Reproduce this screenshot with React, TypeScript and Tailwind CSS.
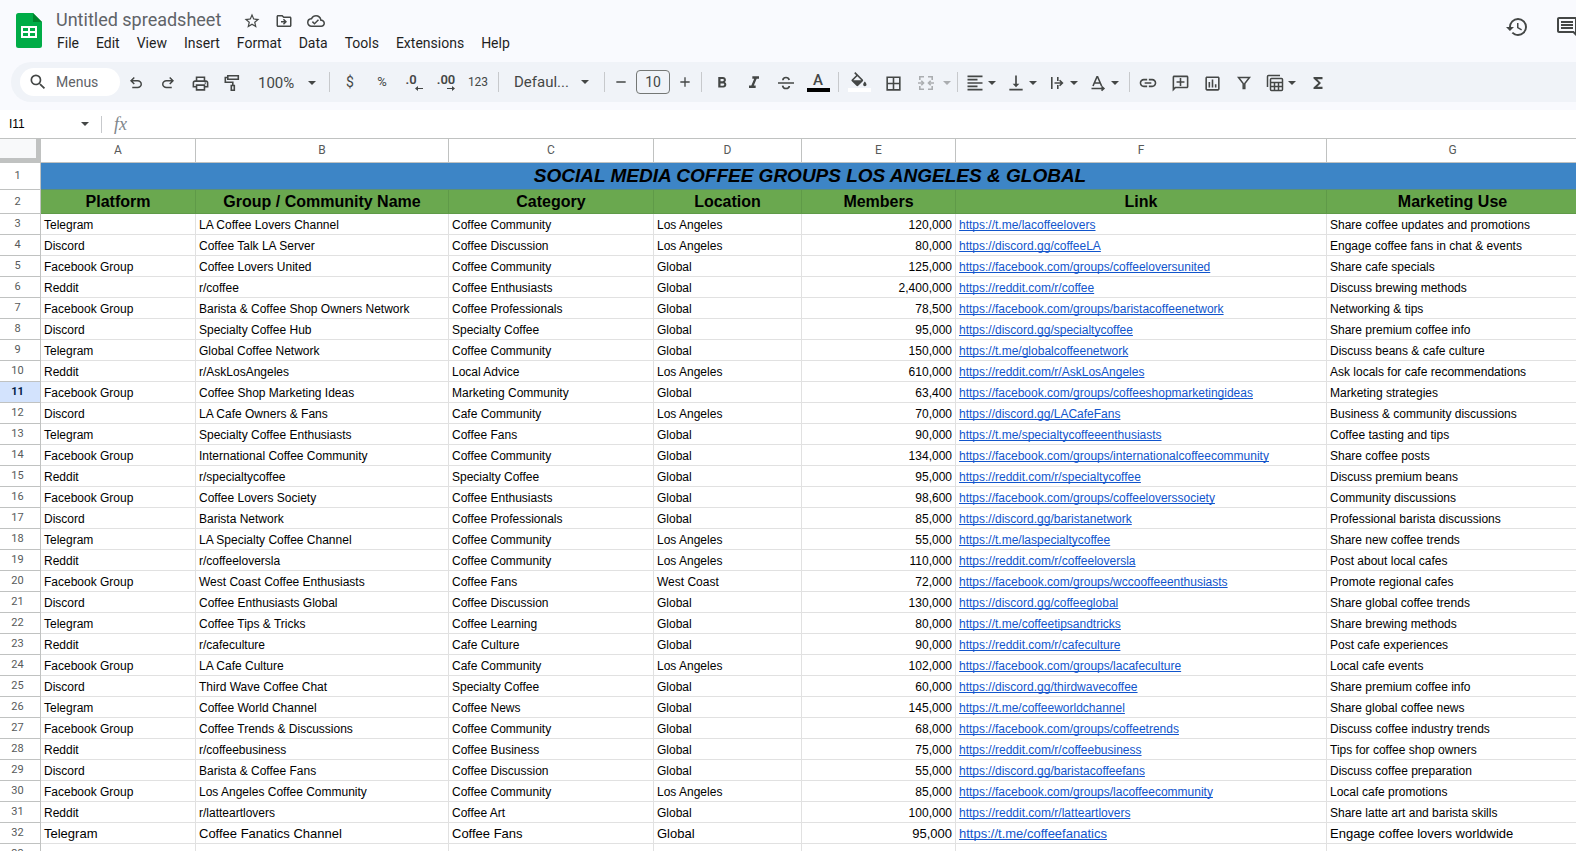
import type { ReactNode } from 'react';
import {
    MdStarBorder,
    MdOutlineDriveFileMove,
    MdOutlineCloudDone,
    MdSearch,
    MdOutlinePrint,
    MdFormatBold,
    MdFormatItalic,
    MdFormatColorFill,
    MdBorderAll,
    MdFormatAlignLeft,
    MdVerticalAlignBottom,
    MdLink,
    MdOutlineAddComment,
    MdOutlineInsertChart,
    MdFunctions,
    MdHistory,
    MdOutlineComment,
    MdAdd,
    MdRemove
} from 'react-icons/md';

type Row = [string, string, string, string, string, string, string];

const MENUS = ['File', 'Edit', 'View', 'Insert', 'Format', 'Data', 'Tools', 'Extensions', 'Help'];

const COLUMNS = ['A', 'B', 'C', 'D', 'E', 'F', 'G'];

const HEADERS = ['Platform', 'Group / Community Name', 'Category', 'Location', 'Members', 'Link', 'Marketing Use'];

const ROWS: Row[] = [
    ['Telegram', 'LA Coffee Lovers Channel', 'Coffee Community', 'Los Angeles', '120,000', 'https://t.me/lacoffeelovers', 'Share coffee updates and promotions'],
    ['Discord', 'Coffee Talk LA Server', 'Coffee Discussion', 'Los Angeles', '80,000', 'https://discord.gg/coffeeLA', 'Engage coffee fans in chat & events'],
    ['Facebook Group', 'Coffee Lovers United', 'Coffee Community', 'Global', '125,000', 'https://facebook.com/groups/coffeeloversunited', 'Share cafe specials'],
    ['Reddit', 'r/coffee', 'Coffee Enthusiasts', 'Global', '2,400,000', 'https://reddit.com/r/coffee', 'Discuss brewing methods'],
    ['Facebook Group', 'Barista & Coffee Shop Owners Network', 'Coffee Professionals', 'Global', '78,500', 'https://facebook.com/groups/baristacoffeenetwork', 'Networking & tips'],
    ['Discord', 'Specialty Coffee Hub', 'Specialty Coffee', 'Global', '95,000', 'https://discord.gg/specialtycoffee', 'Share premium coffee info'],
    ['Telegram', 'Global Coffee Network', 'Coffee Community', 'Global', '150,000', 'https://t.me/globalcoffeenetwork', 'Discuss beans & cafe culture'],
    ['Reddit', 'r/AskLosAngeles', 'Local Advice', 'Los Angeles', '610,000', 'https://reddit.com/r/AskLosAngeles', 'Ask locals for cafe recommendations'],
    ['Facebook Group', 'Coffee Shop Marketing Ideas', 'Marketing Community', 'Global', '63,400', 'https://facebook.com/groups/coffeeshopmarketingideas', 'Marketing strategies'],
    ['Discord', 'LA Cafe Owners & Fans', 'Cafe Community', 'Los Angeles', '70,000', 'https://discord.gg/LACafeFans', 'Business & community discussions'],
    ['Telegram', 'Specialty Coffee Enthusiasts', 'Coffee Fans', 'Global', '90,000', 'https://t.me/specialtycoffeeenthusiasts', 'Coffee tasting and tips'],
    ['Facebook Group', 'International Coffee Community', 'Coffee Community', 'Global', '134,000', 'https://facebook.com/groups/internationalcoffeecommunity', 'Share coffee posts'],
    ['Reddit', 'r/specialtycoffee', 'Specialty Coffee', 'Global', '95,000', 'https://reddit.com/r/specialtycoffee', 'Discuss premium beans'],
    ['Facebook Group', 'Coffee Lovers Society', 'Coffee Enthusiasts', 'Global', '98,600', 'https://facebook.com/groups/coffeeloverssociety', 'Community discussions'],
    ['Discord', 'Barista Network', 'Coffee Professionals', 'Global', '85,000', 'https://discord.gg/baristanetwork', 'Professional barista discussions'],
    ['Telegram', 'LA Specialty Coffee Channel', 'Coffee Community', 'Los Angeles', '55,000', 'https://t.me/laspecialtycoffee', 'Share new coffee trends'],
    ['Reddit', 'r/coffeeloversla', 'Coffee Community', 'Los Angeles', '110,000', 'https://reddit.com/r/coffeeloversla', 'Post about local cafes'],
    ['Facebook Group', 'West Coast Coffee Enthusiasts', 'Coffee Fans', 'West Coast', '72,000', 'https://facebook.com/groups/wccooffeeenthusiasts', 'Promote regional cafes'],
    ['Discord', 'Coffee Enthusiasts Global', 'Coffee Discussion', 'Global', '130,000', 'https://discord.gg/coffeeglobal', 'Share global coffee trends'],
    ['Telegram', 'Coffee Tips & Tricks', 'Coffee Learning', 'Global', '80,000', 'https://t.me/coffeetipsandtricks', 'Share brewing methods'],
    ['Reddit', 'r/cafeculture', 'Cafe Culture', 'Global', '90,000', 'https://reddit.com/r/cafeculture', 'Post cafe experiences'],
    ['Facebook Group', 'LA Cafe Culture', 'Cafe Community', 'Los Angeles', '102,000', 'https://facebook.com/groups/lacafeculture', 'Local cafe events'],
    ['Discord', 'Third Wave Coffee Chat', 'Specialty Coffee', 'Global', '60,000', 'https://discord.gg/thirdwavecoffee', 'Share premium coffee info'],
    ['Telegram', 'Coffee World Channel', 'Coffee News', 'Global', '145,000', 'https://t.me/coffeeworldchannel', 'Share global coffee news'],
    ['Facebook Group', 'Coffee Trends & Discussions', 'Coffee Community', 'Global', '68,000', 'https://facebook.com/groups/coffeetrends', 'Discuss coffee industry trends'],
    ['Reddit', 'r/coffeebusiness', 'Coffee Business', 'Global', '75,000', 'https://reddit.com/r/coffeebusiness', 'Tips for coffee shop owners'],
    ['Discord', 'Barista & Coffee Fans', 'Coffee Discussion', 'Global', '55,000', 'https://discord.gg/baristacoffeefans', 'Discuss coffee preparation'],
    ['Facebook Group', 'Los Angeles Coffee Community', 'Coffee Community', 'Los Angeles', '85,000', 'https://facebook.com/groups/lacoffeecommunity', 'Local cafe promotions'],
    ['Reddit', 'r/latteartlovers', 'Coffee Art', 'Global', '100,000', 'https://reddit.com/r/latteartlovers', 'Share latte art and barista skills'],
    ['Telegram', 'Coffee Fanatics Channel', 'Coffee Fans', 'Global', '95,000', 'https://t.me/coffeefanatics', 'Engage coffee lovers worldwide']
];

const SELECTED_ROW = 11;

function Caret() {
    return (
        <svg className="h-1 w-2 shrink-0" viewBox="0 0 8 4" fill="currentColor">
            <path d="M0 0h8L4 4z" />
        </svg>
    );
}

function Divider() {
    return <div className="mx-1 h-5 w-px shrink-0 bg-[#c7c9cc]" />;
}

function ToolButton({ label, children }: { label: string; children: ReactNode }) {
    return (
        <button aria-label={label} className="flex h-7 w-8 shrink-0 items-center justify-center pt-[2px]">
            {children}
        </button>
    );
}

function TextButton({ label, children }: { label: string; children: ReactNode }) {
    return (
        <button aria-label={label} className="flex h-7 w-8 shrink-0 items-center justify-center">
            {children}
        </button>
    );
}

function NarrowButton({ label, children }: { label: string; children: ReactNode }) {
    return (
        <button aria-label={label} className="flex h-7 w-7 shrink-0 items-center justify-center pt-[2px]">
            {children}
        </button>
    );
}

function SplitButton({ label, children }: { label: string; children: ReactNode }) {
    return (
        <button aria-label={label} className="flex h-7 w-10 shrink-0 items-center gap-[3px] pt-[2px] pl-[3px]">
            {children}
            <Caret />
        </button>
    );
}

function SheetsLogo() {
    return (
        <svg className="h-[35px] w-[26px] shrink-0" viewBox="0 0 26 35">
            <path d="M2.500 0H17l9 9v23.500a2.500 2.500 0 0 1-2.500 2.500h-21A2.500 2.500 0 0 1 0 32.500v-30A2.500 2.500 0 0 1 2.500 0z" fill="#00ac47" />
            <path d="M17 0l9 9h-9z" fill="#00832d" />
            <path d="M5 13h16v12H5zM7 15v3h5v-3zM14 15v3h5v-3zM7 20v3h5v-3zM14 20v3h5v-3z" fill="#fff" fillRule="evenodd" />
        </svg>
    );
}

function UndoIcon({ flipped = false }: { flipped?: boolean }) {
    return (
        <svg className={`h-[18px] w-[18px] ${flipped ? '-scale-x-100' : ''}`} viewBox="0 0 24 24" fill="currentColor">
            <path d="M7 19v-2h7.100q1.575 0 2.738-1T18 13.500 16.838 11 14.100 10H7.800l2.600 2.600L9 14 4 9l5-5 1.400 1.400L7.800 8h6.300q2.425 0 4.163 1.575T20 13.500t-1.737 3.925T14.100 19z" />
        </svg>
    );
}

function PaintRollerIcon() {
    return (
        <svg className="h-[18px] w-[18px]" viewBox="0 0 18 18" fill="none" stroke="currentColor" strokeWidth="1.600">
            <path d="M4.800 1.800h10.500v3.400H4.800z" />
            <path d="M4.800 3.500H2.300v4.700h7.500v3" />
            <path d="M8.300 11.500h3v4.800h-3z" />
        </svg>
    );
}

function DecimalIcon({ digits, increase = false }: { digits: string; increase?: boolean }) {
    return (
        <span className="flex flex-col items-end">
            <span className={`text-[13px] leading-3 font-semibold ${increase ? '' : 'pr-[6px]'}`}>{digits}</span>
            <svg className="h-[5px] w-2" viewBox="0 0 8 5" fill="currentColor">
                <path d={increase ? 'M0 2h5V0l3 2.500L5 5V3H0z' : 'M8 2H3V0L0 2.500 3 5V3h5z'} />
            </svg>
        </span>
    );
}

function StrikeIcon() {
    return (
        <svg className="h-5 w-5" viewBox="0 0 20 20" fill="none" stroke="currentColor" strokeWidth="1.700">
            <path d="M2 10h16" />
            <path d="M13.200 7C12.800 5.300 11.700 4.500 10 4.500S6.900 5.500 6.900 7.300" />
            <path d="M6.600 12.600c.3 1.900 1.500 2.900 3.400 2.900s3.300-1 3.300-2.600" />
        </svg>
    );
}

function MergeIcon() {
    return (
        <svg className="h-[18px] w-[18px]" viewBox="0 0 18 18" fill="none" stroke="currentColor" strokeWidth="1.600">
            <path d="M7 2.800H2.800V6M11 2.800h4.200V6M7 15.200H2.800V12M11 15.200h4.200V12" />
            <path d="M1 9h5M17 9h-5" />
            <path d="M4.300 6.800L6.500 9l-2.200 2.200M13.700 6.800L11.500 9l2.200 2.200" />
        </svg>
    );
}

function WrapIcon() {
    return (
        <svg className="h-5 w-5" viewBox="0 0 20 20" fill="none" stroke="currentColor" strokeWidth="1.600">
            <path d="M4.800 4v12M10.800 4v4M10.800 12v4" />
            <path d="M7.500 10h7.500M12.600 7.200l2.800 2.800-2.800 2.800" />
        </svg>
    );
}

function RotateIcon() {
    return (
        <svg className="h-5 w-5" viewBox="0 0 20 20" fill="none" stroke="currentColor" strokeWidth="1.600">
            <path d="M5 13L9 3.800h.6L13.600 13M6.400 10h5.800" />
            <path d="M3.500 15.500h11.500M13.500 13.300l2.400 2.200-2.400 2.200" />
        </svg>
    );
}

function FilterIcon() {
    return (
        <svg className="h-[18px] w-[18px]" viewBox="0 0 18 18" fill="none" stroke="currentColor" strokeWidth="1.500">
            <path d="M3.500 3.500h11L9.800 9.600v5H8.200v-5z" />
        </svg>
    );
}

function TableViewIcon() {
    return (
        <svg className="h-5 w-5" viewBox="0 0 20 20" fill="none" stroke="currentColor" strokeWidth="1.500">
            <path d="M2.500 14V3.500a1 1 0 0 1 1-1H15" />
            <rect x="5.500" y="5.500" width="12" height="12" rx="1" />
            <path d="M5.500 9.500h12M5.500 13.500h12M9.500 9.500v8M13.500 9.500v8" />
        </svg>
    );
}

function TitleBar() {
    return (
        <header className="flex h-[62px] items-start pt-2 pl-4">
            <div className="pt-[5px]">
                <SheetsLogo />
            </div>
            <div className="ml-[6px]">
                <div className="flex h-6 items-center text-[#444746]">
                    <input
                        aria-label="Document title"
                        defaultValue="Untitled spreadsheet"
                        className="w-[190px] bg-transparent pl-2 text-lg text-[#5f6368] outline-none"
                    />
                    <div className="flex items-center gap-1">
                        <NarrowButton label="Star">
                            <MdStarBorder className="h-[18px] w-[18px]" />
                        </NarrowButton>
                        <NarrowButton label="Move">
                            <MdOutlineDriveFileMove className="h-[18px] w-[18px]" />
                        </NarrowButton>
                        <NarrowButton label="Saved to Drive">
                            <MdOutlineCloudDone className="h-[18px] w-[18px]" />
                        </NarrowButton>
                    </div>
                </div>
                <nav className="flex h-[22px] items-center gap-px pl-px text-sm text-[#1f1f1f]">
                    {MENUS.map((menu) => (
                        <button key={menu} className="px-2">
                            {menu}
                        </button>
                    ))}
                </nav>
            </div>
            <div className="ml-auto flex shrink-0 gap-[26px] pt-[7px] text-[#444746]">
                <button aria-label="Version history">
                    <MdHistory className="h-6 w-6" />
                </button>
                <button aria-label="Comments" className="-mr-[3px]">
                    <MdOutlineComment className="h-6 w-6" />
                </button>
            </div>
        </header>
    );
}

function Toolbar() {
    return (
        <div className="ml-[11px] flex h-10 items-center overflow-hidden rounded-l-full bg-[#f0f3f8] pl-[9px] text-[#444746]">
            <button className="flex h-7 w-[100px] shrink-0 items-center gap-2 rounded-full bg-white pl-2 text-sm">
                <MdSearch className="h-5 w-5" />
                <span className="text-[#5f6368]">Menus</span>
            </button>
            <ToolButton label="Undo">
                <UndoIcon />
            </ToolButton>
            <ToolButton label="Redo">
                <UndoIcon flipped />
            </ToolButton>
            <ToolButton label="Print">
                <MdOutlinePrint className="h-[19px] w-[19px]" />
            </ToolButton>
            <ToolButton label="Paint format">
                <PaintRollerIcon />
            </ToolButton>
            <label className="flex w-[77px] shrink-0 items-center pt-[2px] pl-[10px]">
                <select aria-label="Zoom" className="w-[50px] appearance-none bg-transparent text-[15px] outline-none">
                    <option>100%</option>
                </select>
                <Caret />
            </label>
            <Divider />
            <TextButton label="Format as currency">
                <span className="text-sm">$</span>
            </TextButton>
            <TextButton label="Format as percent">
                <span className="text-[13px]">%</span>
            </TextButton>
            <TextButton label="Decrease decimal places">
                <DecimalIcon digits=".0" />
            </TextButton>
            <TextButton label="Increase decimal places">
                <DecimalIcon digits=".00" increase />
            </TextButton>
            <TextButton label="More formats">
                <span className="text-xs">123</span>
            </TextButton>
            <Divider />
            <label className="flex w-[97px] shrink-0 items-center pl-[11px]">
                <select aria-label="Font" className="w-[67px] appearance-none bg-transparent text-[15px] outline-none">
                    <option>Defaul...</option>
                </select>
                <Caret />
            </label>
            <Divider />
            <button aria-label="Decrease font size" className="flex h-7 w-6 shrink-0 items-center justify-center">
                <MdRemove className="h-4 w-4" />
            </button>
            <input
                aria-label="Font size"
                defaultValue="10"
                className="mx-[3px] h-6 w-[34px] shrink-0 rounded border border-[#747775] bg-transparent text-center text-sm outline-none"
            />
            <button aria-label="Increase font size" className="flex h-7 w-6 shrink-0 items-center justify-center">
                <MdAdd className="h-4 w-4" />
            </button>
            <Divider />
            <ToolButton label="Bold">
                <MdFormatBold className="h-[18px] w-[18px]" />
            </ToolButton>
            <ToolButton label="Italic">
                <MdFormatItalic className="h-5 w-5" />
            </ToolButton>
            <ToolButton label="Strikethrough">
                <StrikeIcon />
            </ToolButton>
            <TextButton label="Text color">
                <span className="flex flex-col items-center">
                    <span className="text-[15px] leading-4 font-medium">A</span>
                    <span className="h-1 w-[23px] bg-black" />
                </span>
            </TextButton>
            <Divider />
            <TextButton label="Fill color">
                <span className="flex flex-col items-center">
                    <span className="h-4 overflow-hidden">
                        <MdFormatColorFill className="h-5 w-5" />
                    </span>
                    <span className="h-1 w-[23px] bg-white" />
                </span>
            </TextButton>
            <button aria-label="Borders" className="flex h-7 w-9 shrink-0 items-center justify-center pt-[2px]">
                <MdBorderAll className="h-[19px] w-[19px]" />
            </button>
            <button aria-label="Merge cells" className="flex h-7 w-[42px] shrink-0 items-center gap-2 pt-[2px] pl-[6px] opacity-40">
                <MergeIcon />
                <Caret />
            </button>
            <Divider />
            <div className="flex gap-px">
                <SplitButton label="Horizontal align">
                    <MdFormatAlignLeft className="h-5 w-5" />
                </SplitButton>
                <SplitButton label="Vertical align">
                    <MdVerticalAlignBottom className="h-5 w-5" />
                </SplitButton>
                <SplitButton label="Text wrapping">
                    <WrapIcon />
                </SplitButton>
                <SplitButton label="Text rotation">
                    <RotateIcon />
                </SplitButton>
            </div>
            <Divider />
            <div className="flex gap-1">
                <NarrowButton label="Insert link">
                    <MdLink className="h-5 w-5" />
                </NarrowButton>
                <NarrowButton label="Insert comment">
                    <MdOutlineAddComment className="h-[19px] w-[19px] -scale-x-100" />
                </NarrowButton>
                <NarrowButton label="Insert chart">
                    <MdOutlineInsertChart className="h-[19px] w-[19px]" />
                </NarrowButton>
                <NarrowButton label="Create a filter">
                    <FilterIcon />
                </NarrowButton>
                <SplitButton label="Table views">
                    <TableViewIcon />
                </SplitButton>
                <button aria-label="Functions" className="flex h-7 w-6 shrink-0 items-center justify-center pt-[2px]">
                    <MdFunctions className="h-[18px] w-[18px]" />
                </button>
            </div>
        </div>
    );
}

function FormulaBar() {
    return (
        <div className="mt-2 flex h-7 items-center bg-white">
            <input
                aria-label="Name box"
                defaultValue="I11"
                className="w-[81px] pl-[9px] font-['Liberation_Sans',Arial,sans-serif] text-xs text-black outline-none"
            />
            <button aria-label="Named ranges" className="text-[#444746]">
                <Caret />
            </button>
            <div className="ml-3 h-[17px] w-px bg-[#c7c9cc]" />
            <label htmlFor="formula" className="pl-3 font-['Liberation_Serif',serif] text-lg text-[#80868b] italic">
                fx
            </label>
            <input id="formula" className="ml-3 flex-1 text-xs outline-none" />
        </div>
    );
}

function RowNumber({ n }: { n: number }) {
    const selected = n === SELECTED_ROW;
    return (
        <th
            scope="row"
            className={`border-r border-b border-[#c0c2c1] p-0 pr-[5px] align-top font-['Roboto',sans-serif] text-[11px] leading-[19px] ${
                selected ? 'bg-[#d3e3fd] font-bold text-[#041e49]' : 'font-normal text-[#575a5a]'
            }`}
        >
            {n}
        </th>
    );
}

function DataRow({ n, cells }: { n: number; cells: Row }) {
    // The last row was pasted in at the sheet's larger default size
    const size = n === 32 ? 'text-[13px]' : 'text-xs';
    return (
        <tr className="h-[21px]">
            <RowNumber n={n} />
            {cells.map((cell, i) => (
                <td
                    key={i}
                    className={`overflow-hidden border-r border-b border-[#e1e1e1] px-[3px] pt-[2px] pb-0 leading-[18px] whitespace-nowrap ${size} ${
                        i === 4 ? 'text-right' : 'text-left'
                    }`}
                >
                    {i === 5 ? (
                        <a href={cell} className="text-[#1155cc] underline [text-decoration-skip-ink:none]">
                            {cell}
                        </a>
                    ) : (
                        cell
                    )}
                </td>
            ))}
        </tr>
    );
}

function RowNumberTall({ n }: { n: number }) {
    return (
        <th
            scope="row"
            className="border-r border-b border-[#c0c2c1] p-0 pr-[5px] font-['Roboto',sans-serif] text-[11px] leading-5 font-normal text-[#575a5a]"
        >
            {n}
        </th>
    );
}

function Grid() {
    return (
        <div className="min-h-0 flex-1 overflow-hidden border-t border-[#c0c2c1] bg-white">
            <table className="w-full min-w-[1579px] table-fixed border-separate border-spacing-0 font-['Liberation_Sans',Arial,sans-serif] text-black">
                <colgroup>
                    <col className="w-[41px]" />
                    <col className="w-[155px]" />
                    <col className="w-[253px]" />
                    <col className="w-[205px]" />
                    <col className="w-[148px]" />
                    <col className="w-[154px]" />
                    <col className="w-[371px]" />
                    <col />
                </colgroup>
                <thead>
                    <tr className="h-6">
                        <td className="border-r-[5px] border-b-[5px] border-[#c0c2c1] bg-[#f8f9fa] p-0" />
                        {COLUMNS.map((col) => (
                            <th
                                key={col}
                                scope="col"
                                className="border-r border-b border-[#c0c2c1] p-0 pb-[2px] font-['Roboto',sans-serif] text-xs leading-5 font-normal text-[#575a5a]"
                            >
                                {col}
                            </th>
                        ))}
                    </tr>
                </thead>
                <tbody>
                    <tr className="h-[27px]">
                        <RowNumberTall n={1} />
                        <td
                            colSpan={7}
                            className="border-b border-[#5b8f78] bg-[#3d85c6] p-0 text-center text-[19px] leading-[26px] font-bold italic"
                        >
                            SOCIAL MEDIA COFFEE GROUPS LOS ANGELES &amp; GLOBAL
                        </td>
                    </tr>
                    <tr className="h-6">
                        <RowNumberTall n={2} />
                        {HEADERS.map((header) => (
                            <td
                                key={header}
                                className="border-r border-b border-[#5f9a48] bg-[#6aa84f] p-0 text-center text-base leading-[23px] font-bold"
                            >
                                {header}
                            </td>
                        ))}
                    </tr>
                    {ROWS.map((cells, i) => (
                        <DataRow key={i} n={i + 3} cells={cells} />
                    ))}
                    <DataRow n={33} cells={['', '', '', '', '', '', '']} />
                </tbody>
            </table>
        </div>
    );
}

export default function App() {
    return (
        <div className="flex h-screen flex-col overflow-hidden bg-[#f9fafe] font-['Roboto',sans-serif]">
            <TitleBar />
            <Toolbar />
            <FormulaBar />
            <Grid />
        </div>
    );
}
